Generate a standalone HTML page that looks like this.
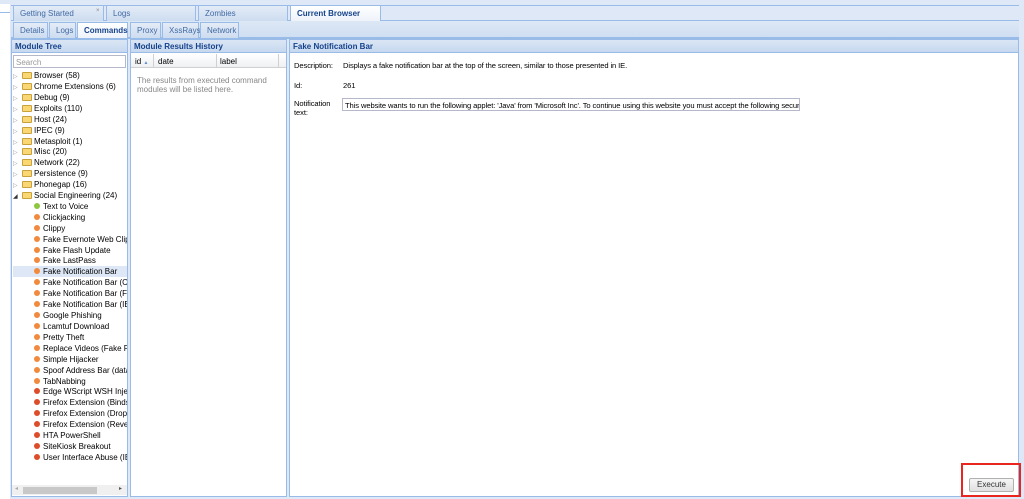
<!DOCTYPE html>
<html><head><meta charset="utf-8"><style>
*{margin:0;padding:0;box-sizing:border-box}
body{width:1024px;height:499px;background:#dfe8f6;font-family:"Liberation Sans",sans-serif;font-size:8px;color:#000;position:relative;overflow:hidden}
.a{position:absolute}
.tab{position:absolute;height:16px;border:1px solid #99bbe8;border-bottom:none;background:linear-gradient(#e4ecf7,#cddcf0);color:#416aa3;padding:3px 0 0 6px;font-size:8px;white-space:nowrap}
.tab.on{background:#fff;background:linear-gradient(#fff,#eef3fa);color:#15428b;font-weight:bold}
.hdr{position:absolute;height:13px;background:linear-gradient(#dae6f4,#c7d8ef);border-bottom:1px solid #99bbe8;color:#15428b;font-weight:bold;padding:2px 0 0 3px;white-space:nowrap;overflow:hidden}
.pan{position:absolute;background:#fff;border:1px solid #99bbe8;overflow:hidden}
.row{position:absolute;left:0;height:11px;white-space:nowrap;line-height:11px;width:114px}
.fold{display:inline-block;width:10px;height:7px;background:#f8d774;border:1px solid #c9a23a;border-radius:1px;vertical-align:-1px;margin-right:2px}
.arr{display:inline-block;width:9px;color:#999;font-size:6px}
.dot{display:inline-block;width:6px;height:6px;border-radius:50%;margin:0 3px 0 34px;vertical-align:0}
.o{background:#f08a3c}.r{background:#dd4d2a}.g{background:#8dc63f}
.rp{font-size:7.6px;letter-spacing:-0.1px}
</style></head><body>
<div class="a" style="left:0;top:0;width:10px;height:499px;background:#fff"></div>
<div class="a" style="left:0;top:0;width:10px;height:4px;background:#dfe8f6"></div>
<div class="a" style="left:0;top:12px;width:10px;height:1px;background:#99bbe8"></div>
<div class="a" style="left:11px;top:5px;width:1008px;height:1px;background:#99bbe8"></div>
<div class="a" style="left:11px;top:20px;width:1008px;height:1px;background:#99bbe8"></div>
<div class="a" style="left:11px;top:37px;width:1008px;height:2px;background:#99bbe8"></div>
<div class="tab" style="left:13px;top:5px;width:91px">Getting Started<span style="position:absolute;left:82px;top:2px;font-size:6px;color:#888">×</span></div>
<div class="tab" style="left:106px;top:5px;width:90px">Logs</div>
<div class="tab" style="left:198px;top:5px;width:90px">Zombies</div>
<div class="tab on" style="left:290px;top:5px;width:91px;height:16px">Current Browser</div>
<div class="a" style="left:11px;top:21px;width:1008px;height:16px;background:linear-gradient(#dde8f6,#cfdef2)"></div>
<div class="tab" style="left:13px;top:22px;width:35px">Details</div>
<div class="tab" style="left:49px;top:22px;width:27px">Logs</div>
<div class="tab on" style="left:77px;top:22px;width:51px;height:16px">Commands</div>
<div class="tab" style="left:130px;top:22px;width:31px">Proxy</div>
<div class="tab" style="left:162px;top:22px;width:37px">XssRays</div>
<div class="tab" style="left:200px;top:22px;width:39px">Network</div>

<div class="pan" style="left:11px;top:39px;width:117px;height:458px">
<div class="hdr" style="left:0;top:0;width:117px">Module Tree</div>
<div class="a" style="left:1px;top:15px;width:113px;height:13px;border:1px solid #b5b8c8;color:#999;padding:2px 2px">Search</div>
<div class="a" style="left:1px;top:30px;width:114px;height:420px">
<div class="row" style="top:0"><span class="arr">▷</span><span class="fold"></span>Browser (58)</div>
<div class="row" style="top:11px"><span class="arr">▷</span><span class="fold"></span>Chrome Extensions (6)</div>
<div class="row" style="top:22px"><span class="arr">▷</span><span class="fold"></span>Debug (9)</div>
<div class="row" style="top:33px"><span class="arr">▷</span><span class="fold"></span>Exploits (110)</div>
<div class="row" style="top:44px"><span class="arr">▷</span><span class="fold"></span>Host (24)</div>
<div class="row" style="top:55px"><span class="arr">▷</span><span class="fold"></span>IPEC (9)</div>
<div class="row" style="top:66px"><span class="arr">▷</span><span class="fold"></span>Metasploit (1)</div>
<div class="row" style="top:76px"><span class="arr">▷</span><span class="fold"></span>Misc (20)</div>
<div class="row" style="top:87px"><span class="arr">▷</span><span class="fold"></span>Network (22)</div>
<div class="row" style="top:98px"><span class="arr">▷</span><span class="fold"></span>Persistence (9)</div>
<div class="row" style="top:109px"><span class="arr">▷</span><span class="fold"></span>Phonegap (16)</div>
<div class="row" style="top:120px"><span class="arr" style="color:#333">◢</span><span class="fold"></span>Social Engineering (24)</div>
<div class="row" style="top:131px"><span class="dot g" style="margin-left:21px"></span>Text to Voice</div>
<div class="row" style="top:142px"><span class="dot o" style="margin-left:21px"></span>Clickjacking</div>
<div class="row" style="top:153px"><span class="dot o" style="margin-left:21px"></span>Clippy</div>
<div class="row" style="top:164px"><span class="dot o" style="margin-left:21px"></span>Fake Evernote Web Clipper</div>
<div class="row" style="top:175px"><span class="dot o" style="margin-left:21px"></span>Fake Flash Update</div>
<div class="row" style="top:185px"><span class="dot o" style="margin-left:21px"></span>Fake LastPass</div>
<div class="row" style="top:196px;background:#dde7f5"><span class="dot o" style="margin-left:21px"></span>Fake Notification Bar</div>
<div class="row" style="top:207px"><span class="dot o" style="margin-left:21px"></span>Fake Notification Bar (Chrome)</div>
<div class="row" style="top:218px"><span class="dot o" style="margin-left:21px"></span>Fake Notification Bar (Firefox)</div>
<div class="row" style="top:229px"><span class="dot o" style="margin-left:21px"></span>Fake Notification Bar (IE)</div>
<div class="row" style="top:240px"><span class="dot o" style="margin-left:21px"></span>Google Phishing</div>
<div class="row" style="top:251px"><span class="dot o" style="margin-left:21px"></span>Lcamtuf Download</div>
<div class="row" style="top:262px"><span class="dot o" style="margin-left:21px"></span>Pretty Theft</div>
<div class="row" style="top:273px"><span class="dot o" style="margin-left:21px"></span>Replace Videos (Fake Plugin)</div>
<div class="row" style="top:284px"><span class="dot o" style="margin-left:21px"></span>Simple Hijacker</div>
<div class="row" style="top:295px"><span class="dot o" style="margin-left:21px"></span>Spoof Address Bar (data URL)</div>
<div class="row" style="top:306px"><span class="dot o" style="margin-left:21px"></span>TabNabbing</div>
<div class="row" style="top:316px"><span class="dot r" style="margin-left:21px"></span>Edge WScript WSH Injection</div>
<div class="row" style="top:327px"><span class="dot r" style="margin-left:21px"></span>Firefox Extension (Bindshell)</div>
<div class="row" style="top:338px"><span class="dot r" style="margin-left:21px"></span>Firefox Extension (Dropper)</div>
<div class="row" style="top:349px"><span class="dot r" style="margin-left:21px"></span>Firefox Extension (Reverse)</div>
<div class="row" style="top:360px"><span class="dot r" style="margin-left:21px"></span>HTA PowerShell</div>
<div class="row" style="top:371px"><span class="dot r" style="margin-left:21px"></span>SiteKiosk Breakout</div>
<div class="row" style="top:382px"><span class="dot r" style="margin-left:21px"></span>User Interface Abuse (IE 9/10)</div>
</div>
<div class="a" style="left:0;top:445px;width:116px;height:10px;background:#f0f0f0"></div>
<div class="a" style="left:11px;top:447px;width:74px;height:7px;background:#c8c8c8"></div>
<div class="a" style="left:3px;top:445px;color:#aaa;font-size:6px">◂</div>
<div class="a" style="left:107px;top:445px;color:#555;font-size:6px">▸</div>
</div>

<div class="pan" style="left:130px;top:39px;width:157px;height:458px">
<div class="hdr" style="left:0;top:0;width:157px">Module Results History</div>
<div class="a" style="left:0;top:14px;width:157px;height:14px;background:linear-gradient(#fff,#eef0f3);border-bottom:1px solid #d0d0d0"></div>
<div class="a" style="left:4px;top:17px">id <span style="font-size:5px;color:#6a8fc7">▲</span></div>
<div class="a" style="left:22px;top:14px;width:1px;height:14px;background:#d0d0d0"></div>
<div class="a" style="left:27px;top:17px">date</div>
<div class="a" style="left:85px;top:14px;width:1px;height:14px;background:#d0d0d0"></div>
<div class="a" style="left:89px;top:17px">label</div>
<div class="a" style="left:147px;top:14px;width:1px;height:14px;background:#d0d0d0"></div>
<div class="a" style="left:6px;top:36px;color:#888;line-height:9px">The results from executed command<br>modules will be listed here.</div>
</div>

<div class="pan" style="left:289px;top:39px;width:730px;height:458px">
<div class="hdr" style="left:0;top:0;width:730px">Fake Notification Bar</div>
<div class="a rp" style="left:4px;top:21px">Description:</div>
<div class="a rp" style="left:53px;top:21px">Displays a fake notification bar at the top of the screen, similar to those presented in IE.</div>
<div class="a rp" style="left:4px;top:41px">Id:</div>
<div class="a rp" style="left:53px;top:41px">261</div>
<div class="a rp" style="left:4px;top:59px;line-height:9px">Notification<br>text:</div>
<div class="a rp" style="left:52px;top:58px;width:458px;height:13px;border:1px solid #b5b8c8;padding:2px 2px;white-space:nowrap;overflow:hidden">This website wants to run the following applet: 'Java' from 'Microsoft Inc'. To continue using this website you must accept the following security</div>
</div>
<div class="a" style="left:961px;top:463px;width:60px;height:34px;border:2px solid #e8251f"></div>
<div class="a" style="left:969px;top:478px;width:45px;height:14px;border:1px solid #b0b0b0;border-radius:2px;background:linear-gradient(#f6f6f6,#e0e0e0);text-align:center;line-height:12px;color:#333">Execute</div>
</body></html>
